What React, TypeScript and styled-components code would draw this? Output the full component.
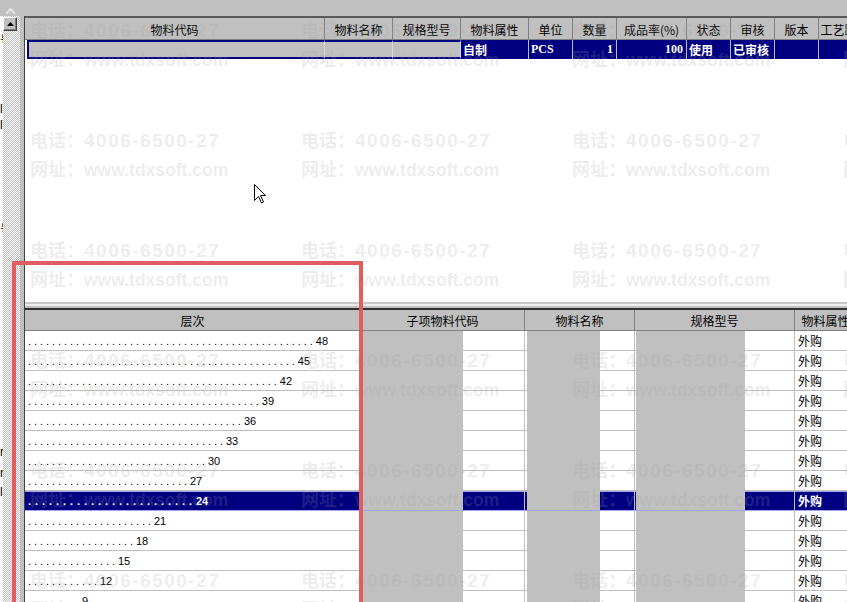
import React from 'react'
import styled, { createGlobalStyle } from 'styled-components'

const CJK = `"Noto Sans CJK SC", "Liberation Sans", sans-serif`
const NAVY = '#000080'
const SILVER = '#c0c0c0'

const GlobalStyle = createGlobalStyle`
  html, body {
    margin: 0;
    padding: 0;
    background: ${SILVER};
  }
  body {
    font-family: "Liberation Sans", Arial, sans-serif;
  }
`

type Col = { title: string; width: number }

const topCols: Col[] = [
  { title: '物料代码', width: 300 },
  { title: '物料名称', width: 68 },
  { title: '规格型号', width: 68 },
  { title: '物料属性', width: 68 },
  { title: '单位', width: 44 },
  { title: '数量', width: 44 },
  { title: '成品率(%)', width: 70 },
  { title: '状态', width: 44 },
  { title: '审核', width: 44 },
  { title: '版本', width: 44 },
  { title: '工艺路线', width: 52 },
]

// current bom header row; the first three cells are still in edit mode
const topRow: { text: string; edit?: boolean; right?: boolean }[] = [
  { text: '', edit: true },
  { text: '', edit: true },
  { text: '', edit: true },
  { text: '自制' },
  { text: 'PCS' },
  { text: '1', right: true },
  { text: '100', right: true },
  { text: '使用' },
  { text: '已审核' },
  { text: '' },
  { text: '' },
]

const bottomCols: Col[] = [
  { title: '层次', width: 336 },
  { title: '子项物料代码', width: 164 },
  { title: '物料名称', width: 110 },
  { title: '规格型号', width: 160 },
  { title: '物料属性', width: 62 },
]

// masked blocks inside the code / name / spec columns
const masks = [
  { offset: 2, width: 100 },
  { offset: 2, width: 73 },
  { offset: 1, width: 109 },
]

const levels = [48, 45, 42, 39, 36, 33, 30, 27, 24, 21, 18, 15, 12, 9]
const selectedLevel = 24

const colTemplate = (cols: Col[]) => cols.map((c) => `${c.width}px`).join(' ')

const Page = styled.div`
  position: relative;
  width: 847px;
  height: 602px;
  overflow: hidden;
  background: ${SILVER};
  display: flex;
  flex-direction: column;
`

const TopBar = styled.div`
  height: 16px;
  flex: none;
  padding-left: 5px;
  box-sizing: border-box;
`

const Main = styled.div`
  flex: 1;
  min-height: 0;
  display: flex;
`

const Gutter = styled.div`
  width: 24px;
  flex: none;
  display: flex;
`

const LabelStrip = styled.div`
  width: 3px;
  background: #fff;
  overflow: hidden;
  display: flex;
  flex-direction: column;
`

const Label = styled.div<{ $gap: number }>`
  margin-top: ${(p) => p.$gap}px;
  font: 12px/14px "Liberation Sans", ${CJK};
  color: #000;
  white-space: nowrap;
`

const ScrollTrack = styled.div`
  width: 17px;
  background-color: ${SILVER};
  background-image: conic-gradient(#fff 25%, transparent 0 50%, #fff 0 75%, transparent 0);
  background-size: 2px 2px;
`

const ScrollButton = styled.div`
  width: 14px;
  height: 14px;
  margin-top: 1px;
  box-sizing: border-box;
  background: ${SILVER};
  border-top: 1px solid #fff;
  border-left: 1px solid #fff;
  border-right: 1px solid #404040;
  border-bottom: 1px solid #404040;
  box-shadow: inset -1px -1px #808080;
  display: flex;
  align-items: center;
  justify-content: center;
`

const Panels = styled.div`
  flex: 1;
  min-width: 0;
  display: flex;
  flex-direction: column;
  border-left: 1px solid #404040;
`

const TopGrid = styled.div`
  height: 286px;
  flex: none;
  box-sizing: border-box;
  border-top: 2px solid #5a5a5a;
  background: #fff;
  overflow: hidden;
`

const Splitter = styled.div`
  height: 6px;
  flex: none;
  background: linear-gradient(#c8c8c8 0 2px, #efefef 2px 4px, ${SILVER} 4px);
`

const BottomGrid = styled.div`
  flex: 1;
  min-height: 0;
  border-top: 2px solid #303030;
  background: #fff;
  overflow: hidden;
`

const GridRow = styled.div<{ $cols: string; $h: number }>`
  display: grid;
  grid-template-columns: ${(p) => p.$cols};
  height: ${(p) => p.$h}px;
`

const HeadCell = styled.div`
  box-sizing: border-box;
  padding-top: 1px;
  background: ${SILVER};
  border-right: 1px solid #808080;
  border-bottom: 1px solid #808080;
  font: 12px ${CJK};
  color: #000;
  display: flex;
  align-items: center;
  justify-content: center;
  white-space: nowrap;
  overflow: hidden;
`

const TopCell = styled.div<{ $edit?: boolean; $first?: boolean; $right?: boolean }>`
  box-sizing: border-box;
  display: flex;
  align-items: center;
  justify-content: ${(p) => (p.$right ? 'flex-end' : 'flex-start')};
  padding: 0 3px 0 2px;
  font: bold 12px "Liberation Serif", "Noto Sans CJK SC", serif;
  white-space: nowrap;
  overflow: hidden;
  color: #fff;
  background: ${(p) => (p.$edit ? SILVER : NAVY)};
  border-top: ${(p) => (p.$edit ? `2px solid ${NAVY}` : 'none')};
  border-bottom: ${(p) => (p.$edit ? `2px solid ${NAVY}` : 'none')};
  border-left: ${(p) => (p.$first ? `2px solid ${NAVY}` : 'none')};
  border-right: 1px solid ${(p) => (p.$edit ? '#d8d8d8' : '#b8b8d8')};
  margin-left: ${(p) => (p.$first ? 2 : 0)}px;
`

const Cell = styled.div<{ $sel?: boolean }>`
  box-sizing: border-box;
  display: flex;
  align-items: center;
  padding-left: 3px;
  white-space: nowrap;
  overflow: hidden;
  background: ${(p) => (p.$sel ? NAVY : '#fff')};
  color: ${(p) => (p.$sel ? '#fff' : '#000')};
  font-weight: ${(p) => (p.$sel ? 700 : 400)};
  border-right: 1px solid ${SILVER};
  border-bottom: 1px solid ${(p) => (p.$sel ? '#a4a4ec' : SILVER)};
  box-shadow: ${(p) => (p.$sel ? 'inset 0 1px #a4a4ec' : 'none')};
`

const LevelText = styled.span`
  font-size: 11px;
  font-family: "Liberation Sans", Arial, sans-serif;
`

const Dots = styled.span<{ $sel?: boolean }>`
  letter-spacing: ${(p) => (p.$sel ? 3.94 : 2.94)}px;
`

const AttrText = styled.span`
  font-size: 12px;
  font-family: ${CJK};
`

const Mask = styled.div<{ $offset: number; $width: number }>`
  align-self: stretch;
  margin-left: ${(p) => p.$offset - 3}px;
  margin-bottom: -1px;
  width: ${(p) => p.$width}px;
  background: ${SILVER};
`

const Watermark = styled.div`
  position: absolute;
  left: 30px;
  top: 15px;
  display: grid;
  grid-template-columns: repeat(4, 271px);
  grid-auto-rows: 110px;
  pointer-events: none;
  color: rgba(160, 160, 160, 0.2);
  font-weight: 700;
  white-space: nowrap;
`

const MarkLine = styled.div<{ $size: number; $spacing: number }>`
  height: 29px;
  line-height: 29px;
  font-family: "Liberation Sans", ${CJK};
  font-size: ${(p) => p.$size}px;
  letter-spacing: ${(p) => p.$spacing}px;
`

const MarkPrefix = styled.span`
  font-family: ${CJK};
  font-size: 18px;
  letter-spacing: 0;
`

const Frame = styled.div`
  position: absolute;
  left: 12px;
  top: 261px;
  width: 351px;
  height: 400px;
  box-sizing: border-box;
  border: 4px solid #e25e5e;
  pointer-events: none;
`

const Pointer = styled.svg`
  position: absolute;
  left: 254px;
  top: 184px;
`

const App = () => {
  const top = colTemplate(topCols)
  const bottom = colTemplate(bottomCols)

  return (
    <>
      <GlobalStyle />
      <Page>
        <TopBar>
          <svg width="11" height="6" viewBox="0 0 11 6">
            <polyline points="1,6 5.5,1 10,6" fill="none" stroke="#e4e4e4" strokeWidth="2" />
          </svg>
        </TopBar>
        <Main>
          <Gutter>
            <LabelStrip>
              <Label $gap={18}>号</Label>
              <Label $gap={54}>l</Label>
              <Label $gap={2}>l</Label>
              <Label $gap={91}>号</Label>
              <Label $gap={208}>r</Label>
              <Label $gap={7}>r</Label>
              <Label $gap={5}>l</Label>
            </LabelStrip>
            <ScrollTrack>
              <ScrollButton>
                <svg width="7" height="4" viewBox="0 0 7 4">
                  <polygon points="3.5,0 7,4 0,4" fill="#000" />
                </svg>
              </ScrollButton>
            </ScrollTrack>
          </Gutter>

          <Panels>
            <TopGrid>
              <GridRow $cols={top} $h={22}>
                {topCols.map((c) => (
                  <HeadCell key={c.title}>{c.title}</HeadCell>
                ))}
              </GridRow>
              <GridRow $cols={top} $h={19}>
                {topRow.map((cell, i) => (
                  <TopCell key={i} $edit={cell.edit} $first={i === 0} $right={cell.right}>
                    {cell.text}
                  </TopCell>
                ))}
              </GridRow>
            </TopGrid>

            <Splitter />

            <BottomGrid>
              <GridRow $cols={bottom} $h={21}>
                {bottomCols.map((c) => (
                  <HeadCell key={c.title}>{c.title}</HeadCell>
                ))}
              </GridRow>
              {levels.map((lv) => {
                const sel = lv === selectedLevel
                return (
                  <GridRow key={lv} $cols={bottom} $h={20}>
                    <Cell $sel={sel}>
                      <LevelText>
                        <Dots $sel={sel}>{'.'.repeat(lv)}</Dots>
                        {lv}
                      </LevelText>
                    </Cell>
                    {masks.map((m, i) => (
                      <Cell key={i} $sel={sel}>
                        <Mask $offset={m.offset} $width={m.width} />
                      </Cell>
                    ))}
                    <Cell $sel={sel}>
                      <AttrText>外购</AttrText>
                    </Cell>
                  </GridRow>
                )
              })}
            </BottomGrid>
          </Panels>
        </Main>

        <Watermark>
          {Array.from({ length: 24 }).map((_, i) => (
            <div key={i}>
              <MarkLine $size={19} $spacing={1.5}>
                <MarkPrefix>电话：</MarkPrefix>4006-6500-27
              </MarkLine>
              <MarkLine $size={17.5} $spacing={0}>
                <MarkPrefix>网址：</MarkPrefix>www.tdxsoft.com
              </MarkLine>
            </div>
          ))}
        </Watermark>

        <Frame />

        <Pointer width="13" height="20" viewBox="0 0 13 20">
          <path
            d="M0.5 0.5 L0.5 16.5 L4.5 12.5 L7.5 19 L9.5 18 L6.5 11.5 L11.5 11.5 Z"
            fill="#fff"
            stroke="#000"
            strokeWidth="1"
          />
        </Pointer>
      </Page>
    </>
  )
}

export default App
